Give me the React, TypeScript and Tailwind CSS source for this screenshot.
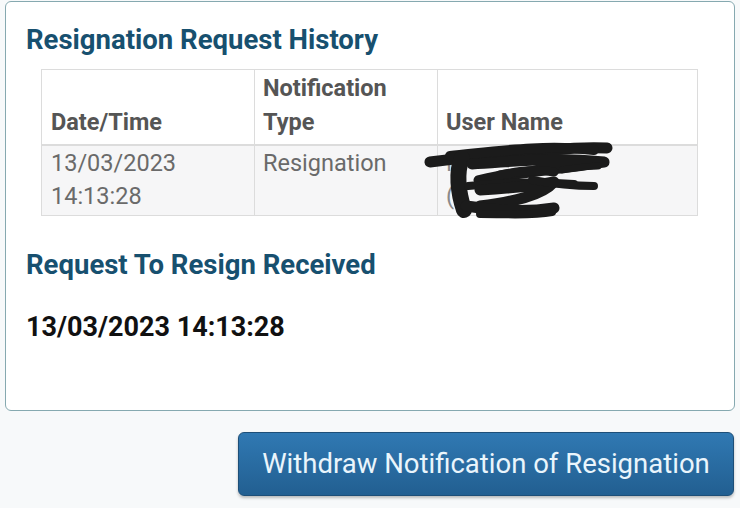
export default function App() {
  return (
    <div className="w-[740px] h-[508px] bg-[#f7f9fa] overflow-hidden font-['Roboto',sans-serif]">
      <div className="mx-[5px] mt-[1px] h-[410px] rounded-[6px] border border-[#86a9b0] bg-white px-[20px] pt-[20px]">
        <h2 className="text-[27.5px] font-bold leading-[36px] text-[#17506f]">Resignation Request History</h2>

        <table className="mt-[11px] ml-[15px] w-[657px] border-collapse border border-[#dcdcdc] text-[23.5px]">
          <thead>
            <tr className="align-bottom">
              <th className="w-[213px] border border-[#dcdcdc] px-[9px] pb-[5px] text-left font-bold leading-[34px] text-[#555]">Date/Time</th>
              <th className="w-[183px] border border-[#dcdcdc] px-[8px] pt-[1px] pb-[5px] text-left font-bold leading-[34px] text-[#555]">
                Notification
                <br />
                Type
              </th>
              <th className="border border-[#dcdcdc] px-[8px] pb-[5px] text-left font-bold leading-[34px] text-[#555]">User Name</th>
            </tr>
          </thead>
          <tbody>
            <tr className="align-top bg-[#f6f6f7]">
              <td className="border border-[#dcdcdc] border-t-2 px-[9px] pt-[1px] pb-[2px] leading-[33px] text-[#6a6a6a]">
                13/03/2023
                <br />
                14:13:28
              </td>
              <td className="border border-[#dcdcdc] border-t-2 px-[8px] pt-[1px] leading-[33px] text-[#6a6a6a]">Resignation</td>
              <td className="relative border border-[#dcdcdc] border-t-2 px-[8px] pt-[1px] leading-[33px] text-[#8a8a8a]">
                R
                <br />
                (1
                <svg className="absolute left-[-16px] top-[-6px]" width="200" height="82" viewBox="0 0 200 82" fill="none" stroke="#1b1b1b" strokeLinecap="round" strokeLinejoin="round">
                  <path d="M8 22 C40 18 80 14 130 10 C150 8 165 7 185 8" strokeWidth="11" />
                  <path d="M28 16 C70 12 120 4 172 10" strokeWidth="10" />
                  <path d="M40 18 C34 32 36 52 42 70" strokeWidth="16" />
                  <path d="M50 24 C90 22 130 16 182 22 C150 26 110 32 78 36" strokeWidth="11" />
                  <path d="M56 40 C90 32 110 28 132 32" strokeWidth="9" />
                  <path d="M46 46 C80 42 120 42 152 44" strokeWidth="8" />
                  <path d="M58 50 C90 48 110 46 132 42 C120 56 90 62 58 66" strokeWidth="11" />
                  <path d="M110 40 C132 44 150 46 172 46" strokeWidth="8" />
                  <path d="M44 66 C72 70 100 73 132 68" strokeWidth="11" />
                  <path d="M58 74 C90 74 110 76 130 72" strokeWidth="8" />
                  <path d="M140 30 C155 28 165 26 176 26" strokeWidth="7" />
                </svg>
              </td>
            </tr>
          </tbody>
        </table>

        <h2 className="mt-[31px] text-[27.5px] font-bold leading-[36px] text-[#17506f]">Request To Resign Received</h2>
        <p className="mt-[27px] text-[27px] font-bold leading-[34px] text-[#111]">13/03/2023 14:13:28</p>
      </div>

      <div className="mt-[21px] flex justify-end pr-[6px]">
        <button className="h-[64px] w-[496px] rounded-[6px] border border-[#1d4f78] bg-gradient-to-b from-[#3079b3] to-[#225f91] text-[27.5px] text-[#eaf5fc] shadow-[0_2px_3px_rgba(0,0,0,0.25)]">
          Withdraw Notification of Resignation
        </button>
      </div>
    </div>
  );
}
